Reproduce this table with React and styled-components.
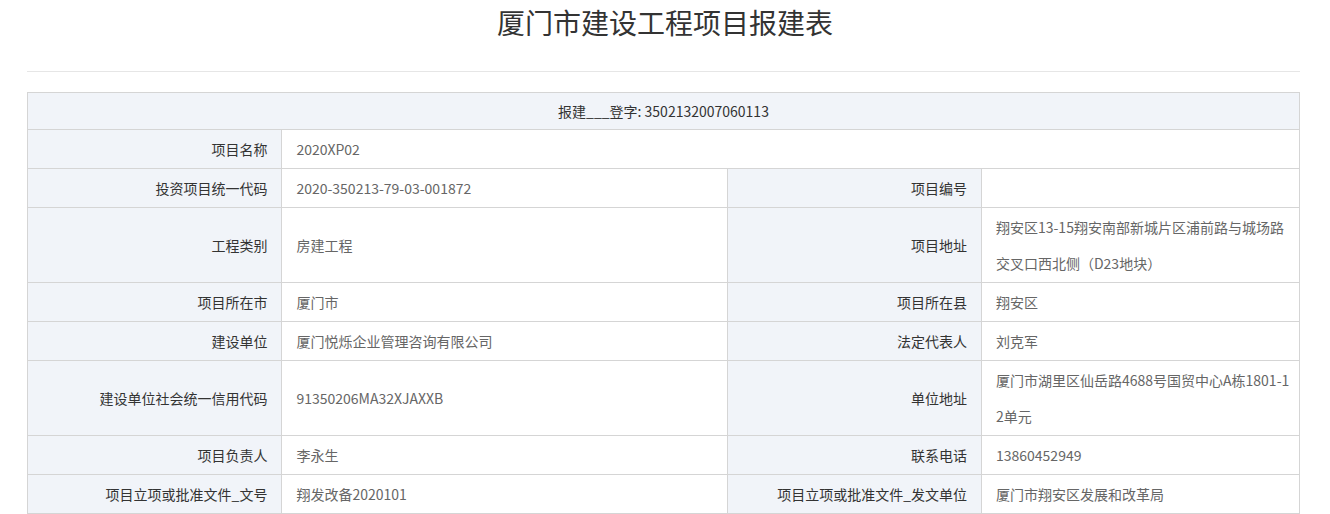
import React from "react";
import styled, { createGlobalStyle } from "styled-components";

const GlobalStyle = createGlobalStyle`
    body {
        margin: 0;
        background: #fff;
        font-family: "Noto Sans CJK SC", "Noto Sans", sans-serif;
    }
`;

const Page = styled.div`
    width: 1273px;
    padding: 0 30px 0 27px;
`;

const Title = styled.h1`
    margin: 0;
    font-size: 28px;
    font-weight: normal;
    line-height: 44px;
    color: #333;
    text-align: center;
    padding-left: 3px;
`;

const Divider = styled.div`
    height: 1px;
    background: #e6e6e6;
    margin: 27px 0 20px;
`;

const Table = styled.table`
    width: 100%;
    border-collapse: collapse;
    table-layout: fixed;
    font-size: 14px;
    border: 1px solid #d5d5d5;
`;

const HeadCell = styled.td`
    background: #f1f4f9;
    color: #333;
    text-align: center;
    line-height: 36px;
    padding: 0;
    border: 1px solid #d5d5d5;
`;

const Label = styled.td`
    background: #f1f4f9;
    color: #333;
    text-align: right;
    line-height: 36px;
    padding: 1px 14px;
    border: 1px solid #d5d5d5;
    vertical-align: middle;
`;

const Value = styled.td`
    background: #fff;
    color: #666;
    text-align: left;
    line-height: 36px;
    padding: 1px 4px 1px 14px;
    border: 1px solid #d5d5d5;
    vertical-align: middle;
    word-break: break-all;
`;

const rows = [
    [["投资项目统一代码", "2020-350213-79-03-001872"], ["项目编号", ""]],
    [["工程类别", "房建工程"], ["项目地址", "翔安区13-15翔安南部新城片区浦前路与城场路交叉口西北侧（D23地块）"]],
    [["项目所在市", "厦门市"], ["项目所在县", "翔安区"]],
    [["建设单位", "厦门悦烁企业管理咨询有限公司"], ["法定代表人", "刘克军"]],
    [["建设单位社会统一信用代码", "91350206MA32XJAXXB"], ["单位地址", "厦门市湖里区仙岳路4688号国贸中心A栋1801-12单元"]],
    [["项目负责人", "李永生"], ["联系电话", "13860452949"]],
    [["项目立项或批准文件_文号", "翔发改备2020101"], ["项目立项或批准文件_发文单位", "厦门市翔安区发展和改革局"]],
];

const App = () => {
    return (
        <Page>
            <GlobalStyle />
            <Title>厦门市建设工程项目报建表</Title>
            <Divider />
            <Table>
                <colgroup>
                    <col style={{ width: "20%" }} />
                    <col style={{ width: "35%" }} />
                    <col style={{ width: "20%" }} />
                    <col style={{ width: "25%" }} />
                </colgroup>
                <tbody>
                    <tr>
                        <HeadCell colSpan={4}>报建___登字: 3502132007060113</HeadCell>
                    </tr>
                    <tr>
                        <Label>项目名称</Label>
                        <Value colSpan={3}>2020XP02</Value>
                    </tr>
                    {rows.map((r, i) => (
                        <tr key={i}>
                            <Label>{r[0][0]}</Label>
                            <Value>{r[0][1]}</Value>
                            <Label>{r[1][0]}</Label>
                            <Value>{r[1][1]}</Value>
                        </tr>
                    ))}
                </tbody>
            </Table>
        </Page>
    );
};

export default App;
